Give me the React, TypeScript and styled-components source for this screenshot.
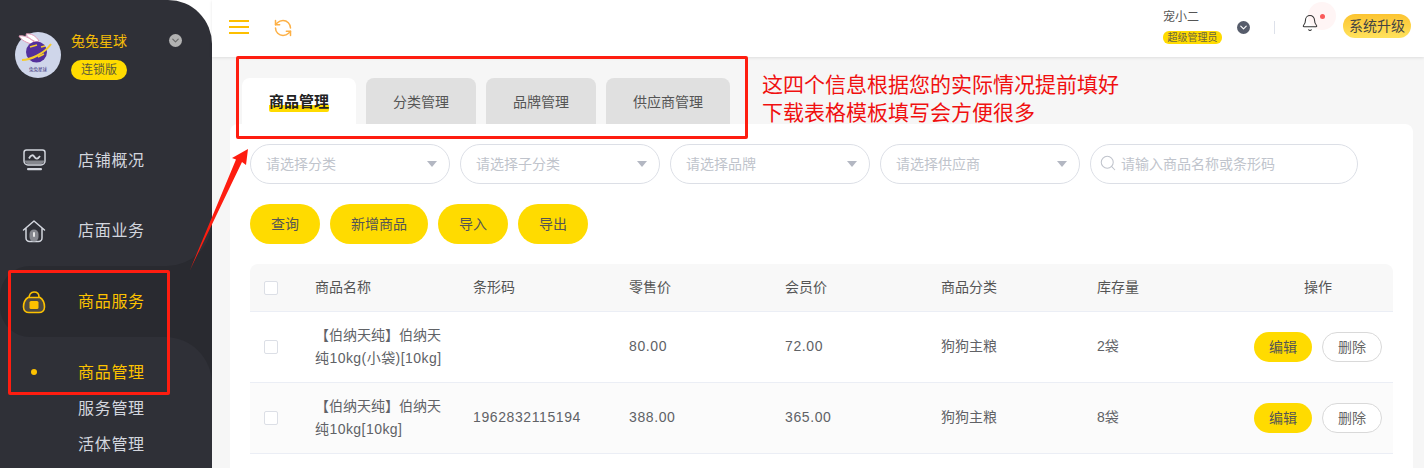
import React from 'react';
import styled, { createGlobalStyle } from 'styled-components';
import { RefreshCcw, Search, Bell, ChevronDown } from 'lucide-react';

const SANS = `"Liberation Sans", "Noto Sans CJK SC", sans-serif`;
const LIGHT = '#2f3037';
const DARK = '#292a30';
const YELLOW = '#ffdb00';
const AMBER = '#fdc200';

const Global = createGlobalStyle`
  html, body { margin: 0; padding: 0; height: 100%; overflow: hidden; background: #fff; }
  body { font-family: ${SANS}; font-size: 14px; color: #606266; }
  #root { height: 100%; }
  * { box-sizing: border-box; }
`;

const Shell = styled.div`
  position: relative;
  display: flex;
  width: 1424px;
  height: 468px;
  overflow: hidden;
  background: #fff;
`;

const Sidebar = styled.aside`
  flex: 0 0 212px;
  height: 100%;
  display: flex;
  flex-direction: column;
  background: ${LIGHT};
  border-top-right-radius: 44px;
  overflow: hidden;
`;

const Profile = styled.div`
  height: 125px;
  padding: 32px 30px 0 15px;
  display: flex;
  align-items: flex-start;
`;

const Logo = styled.svg`
  flex: 0 0 46px;
  width: 46px;
  height: 46px;
`;

const ProfileInfo = styled.div`
  margin-left: 10px;
  width: 56px;
  display: flex;
  flex-direction: column;
  align-items: stretch;
`;

const ShopName = styled.div`
  font-size: 14px;
  line-height: 20px;
  margin-top: -1px;
  color: #f3bb06;
  white-space: nowrap;
`;

const PlanBadge = styled.div`
  margin-top: 9px;
  height: 20px;
  border-radius: 10px;
  background: ${YELLOW};
  color: #5c5a3a;
  font-size: 12px;
  line-height: 20px;
  text-align: center;
`;

const ProfileChevron = styled.span`
  margin-left: 42px;
  margin-top: 2px;
  width: 13px;
  height: 13px;
  border-radius: 50%;
  background: #b2b2b2;
  color: #6a6a6a;
  display: flex;
  align-items: center;
  justify-content: center;
`;

const NavItem = styled.div<{ $h?: number; $active?: boolean; $round?: boolean }>`
  height: ${p => p.$h ?? 71}px;
  display: flex;
  align-items: center;
  padding-left: 22px;
  color: ${p => (p.$active ? AMBER : '#d3d6de')};
  background: ${p => (p.$active ? DARK : LIGHT)};
  border-radius: ${p => (p.$active ? '30px 0 0 30px' : p.$round ? '0 0 45px 0' : '0')};
`;

const NavIcon = styled.svg`
  width: 24px;
  height: 24px;
  flex: 0 0 24px;
`;

const NavLabel = styled.span`
  margin-left: 32px;
  margin-bottom: 3px;
  font-size: 16px;
  letter-spacing: 0.7px;
  white-space: nowrap;
`;

const Band = styled.div`
  flex: 1;
  display: flex;
  flex-direction: column;
  background: linear-gradient(to right, ${LIGHT} 50%, ${DARK} 50%);
`;

const SubMenu = styled.div`
  flex: 1;
  padding-top: 17px;
  background: ${LIGHT};
  border-top-right-radius: 47px;
`;

const SubItem = styled.div<{ $active?: boolean }>`
  height: 36px;
  display: flex;
  align-items: center;
  padding-left: 31px;
  color: ${p => (p.$active ? AMBER : '#d3d6de')};
`;

const Dot = styled.span<{ $on?: boolean }>`
  flex: 0 0 6px;
  width: 6px;
  height: 6px;
  border-radius: 50%;
  background: ${p => (p.$on ? AMBER : 'transparent')};
`;

const SubLabel = styled.span`
  margin-left: 41px;
  margin-bottom: 2px;
  font-size: 16px;
  letter-spacing: 0.7px;
  white-space: nowrap;
`;

const Main = styled.main`
  flex: 1;
  min-width: 0;
  display: flex;
  flex-direction: column;
  background: #f6f6f6;
`;

const TopBar = styled.header`
  flex: 0 0 57px;
  height: 57px;
  background: #fff;
  box-shadow: 0 1px 3px rgba(0, 0, 0, 0.1);
  display: flex;
  align-items: flex-start;
  padding: 0 13px 0 17px;
`;

const Burger = styled.div`
  margin-top: 20px;
  width: 20px;
  height: 14px;
  display: flex;
  flex-direction: column;
  justify-content: space-between;
`;

const BurgerBar = styled.span`
  display: block;
  height: 2px;
  background: #fdbf00;
`;

const RefreshBox = styled.span`
  margin-left: 24px;
  margin-top: 18px;
  width: 20px;
  height: 20px;
  color: #fdb045;
  display: flex;
`;

const Spacer = styled.div`
  flex: 1;
`;

const UserBox = styled.div`
  margin-top: 9px;
  width: 59px;
  display: flex;
  flex-direction: column;
  align-items: flex-start;
`;

const UserName = styled.div`
  font-size: 12px;
  line-height: 17px;
  color: #555;
`;

const RoleBadge = styled.div`
  margin-top: 5px;
  width: 59px;
  height: 13px;
  border-radius: 6px;
  background: ${YELLOW};
  color: #6a6440;
  font-size: 10px;
  line-height: 13px;
  text-align: center;
  white-space: nowrap;
`;

const UserChevron = styled.span`
  margin-left: 15px;
  margin-top: 21px;
  width: 13px;
  height: 13px;
  border-radius: 50%;
  background: #565c6b;
  color: #fff;
  display: flex;
  align-items: center;
  justify-content: center;
`;

const Divider = styled.span`
  margin-left: 24px;
  margin-top: 21px;
  width: 1px;
  height: 13px;
  background: #dde1ea;
`;

const BellBox = styled.div`
  position: relative;
  margin-left: 28px;
  margin-top: 16px;
  width: 14px;
  height: 16px;
  color: #333;
  display: flex;
`;

const BellHalo = styled.span`
  position: absolute;
  left: 5px;
  top: -14px;
  width: 28px;
  height: 28px;
  border-radius: 50%;
  background: #fff5f5;
`;

const BellDot = styled.span`
  position: absolute;
  left: 17px;
  top: -2px;
  width: 5px;
  height: 5px;
  border-radius: 50%;
  background: #fa5a5a;
`;

const BellGlyph = styled(Bell)`
  position: relative;
  flex: 0 0 18px;
  margin: -2px 0 0 -2px;
`;

const UpgradeButton = styled.button`
  margin-left: 26px;
  margin-top: 14px;
  width: 68px;
  height: 24px;
  border: 0;
  padding: 0;
  border-radius: 12px;
  background: linear-gradient(180deg, #fcc431, #ffe25c);
  color: #444;
  font: 14px/24px ${SANS};
  white-space: nowrap;
  position: relative;
`;

const Content = styled.div`
  flex: 1;
  min-height: 0;
  display: flex;
  flex-direction: column;
  padding: 21px 11px 0 18px;
`;

const Tabs = styled.div`
  flex: 0 0 46px;
  height: 46px;
  display: flex;
  gap: 10px;
  padding-left: 12px;
`;

const Tab = styled.div<{ $active?: boolean; $w: number }>`
  width: ${p => p.$w}px;
  height: 46px;
  border-radius: 8px 8px 0 0;
  background: ${p => (p.$active ? '#fff' : '#e0e0e0')};
  color: ${p => (p.$active ? '#222' : '#555')};
  display: flex;
  align-items: center;
  justify-content: center;
`;

const TabActiveLabel = styled.span`
  font-size: 15px;
  font-weight: 700;
  line-height: 20px;
  height: 20px;
  margin-top: 2px;
  background: linear-gradient(${YELLOW}, ${YELLOW}) no-repeat 0 100% / 100% 7px;
  border-radius: 2px;
`;

const Card = styled.section`
  flex: 1;
  min-height: 0;
  background: #fff;
  border-radius: 8px 8px 0 0;
  padding: 20px 20px 0;
  overflow: hidden;
`;

const Filters = styled.div`
  display: flex;
  gap: 10px;
`;

const SelectBox = styled.div`
  width: 200px;
  height: 40px;
  border: 1px solid #dcdfe6;
  border-radius: 20px;
  display: flex;
  align-items: center;
  justify-content: space-between;
  padding: 0 12px 2px 15px;
  color: #c0c4cc;
  font-size: 14px;
`;

const Caret = styled.span`
  width: 0;
  height: 0;
  margin-top: 2px;
  border-left: 5px solid transparent;
  border-right: 5px solid transparent;
  border-top: 6px solid #b3b7c2;
`;

const SearchBox = styled.div`
  width: 268px;
  height: 40px;
  border: 1px solid #dcdfe6;
  border-radius: 20px;
  display: flex;
  align-items: center;
  padding: 0 0 2px 8px;
  color: #c0c4cc;
  font-size: 14px;
  gap: 4px;
`;

const Actions = styled.div`
  margin-top: 20px;
  display: flex;
  gap: 10px;
`;

const PillButton = styled.button<{ $w: number }>`
  width: ${p => p.$w}px;
  height: 40px;
  border: 0;
  padding: 0 0 2px;
  border-radius: 20px;
  background: ${YELLOW};
  color: #555;
  font: 14px ${SANS};
`;

const Table = styled.div`
  margin-top: 20px;
`;

const Row = styled.div<{ $head?: boolean; $alt?: boolean }>`
  display: grid;
  grid-template-columns: 55px 158px 156px 156px 156px 156px 156px 150px;
  align-items: center;
  height: ${p => (p.$head ? 48 : 71)}px;
  border-bottom: 1px solid #ebeef5;
  background: ${p => (p.$head ? '#f8f8f8' : p.$alt ? '#fbfbfb' : '#fff')};
  border-radius: ${p => (p.$head ? '8px 8px 0 0' : '0')};
  color: ${p => (p.$head ? '#555' : '#606266')};
`;

const Check = styled.span`
  display: block;
  width: 14px;
  height: 14px;
  margin-left: 14px;
  border: 1px solid #dcdfe6;
  border-radius: 2px;
  background: #fff;
`;

const Cell = styled.div`
  padding: 0 10px;
  font-size: 14px;
  line-height: 23px;
`;

const NameLine = styled.div<{ $spaced?: boolean }>`
  white-space: nowrap;
  letter-spacing: ${p => (p.$spaced ? '0.45px' : '0')};
`;

const BodyCell = styled(Cell)`
  padding-bottom: 2px;
`;

const NumCell = styled(BodyCell)`
  letter-spacing: 0.6px;
`;

const OpsHead = styled(Cell)`
  text-align: center;
  padding: 0;
`;

const Ops = styled.div`
  display: flex;
  gap: 10px;
  padding-left: 11px;
`;

const EditButton = styled.button`
  width: 58px;
  height: 30px;
  border: 0;
  padding: 0 0 2px;
  border-radius: 15px;
  background: ${YELLOW};
  color: #555;
  font: 14px ${SANS};
`;

const DeleteButton = styled.button`
  width: 60px;
  height: 30px;
  padding: 0 0 2px;
  border: 1px solid #d9d9d9;
  border-radius: 15px;
  background: #fff;
  color: #666;
  font: 14px ${SANS};
`;

/* Hand-drawn review marks that lie on top of the screenshot */
const MarkBox = styled.div<{ $x: number; $y: number; $w: number; $h: number }>`
  position: absolute;
  left: ${p => p.$x}px;
  top: ${p => p.$y}px;
  width: ${p => p.$w}px;
  height: ${p => p.$h}px;
  border: 3px solid #fe1d10;
  border-radius: 2px;
  pointer-events: none;
`;

const MarkNote = styled.div`
  position: absolute;
  left: 762px;
  top: 69px;
  font: 21px/28px "Noto Sans CJK SC", sans-serif;
  color: #f01010;
  white-space: nowrap;
`;

const MarkArrow = styled.svg`
  position: absolute;
  left: 0;
  top: 0;
  pointer-events: none;
`;

const rows = [
  { line1: '【伯纳天纯】伯纳天', line2: '纯10kg(小袋)[10kg]', code: '', price: '80.00', member: '72.00', cat: '狗狗主粮', stock: '2袋' },
  { line1: '【伯纳天纯】伯纳天', line2: '纯10kg[10kg]', code: '1962832115194', price: '388.00', member: '365.00', cat: '狗狗主粮', stock: '8袋' },
];

export default function App() {
  return (
    <Shell>
      <Global />
      <Sidebar>
        <Profile>
          <Logo viewBox="0 0 46 46">
            <circle cx="23" cy="23" r="23" fill="#cfd6ea" />
            <path d="M17 12 C12 11 6 8 4 4 C9 3 15 6 19 10Z" fill="#fff" stroke="#e29ab6" strokeWidth="1" />
            <path d="M21 10 C17 8 12 5 11 2 C16 1 21 4 24 9Z" fill="#fff" stroke="#e29ab6" strokeWidth="1" />
            <circle cx="21.5" cy="20" r="10.5" fill="#53309c" />
            <path d="M7 28 C15 28 29 22 36 12" fill="none" stroke="#f5cc2e" strokeWidth="2" />
            <path d="M15 15 L22 13 M23 25 L29 22 M26 15 L30 14" stroke="#f5cc2e" strokeWidth="1.6" />
            <text x="23" y="39" textAnchor="middle" fontSize="4.5" fill="#3a2f78" fontFamily={SANS}>兔兔星球</text>
          </Logo>
          <ProfileInfo>
            <ShopName>兔兔星球</ShopName>
            <PlanBadge>连锁版</PlanBadge>
          </ProfileInfo>
          <ProfileChevron><ChevronDown size={11} strokeWidth={2.5} /></ProfileChevron>
        </Profile>
        <NavItem $h={70}>
          <NavIcon viewBox="0 0 24 24" fill="none">
            <path d="M4.5 2 H20.5 A2.5 2.5 0 0 1 23 4.5 V13 A4 4 0 0 1 19 17 H6 A4 4 0 0 1 2 13 V4.5 A2.5 2.5 0 0 1 4.5 2Z" stroke="#d3d6de" strokeWidth="1.5" />
            <path d="M3 12.5 H22 V13 a3 3 0 0 1 -3 3 H6 a3 3 0 0 1 -3 -3Z" fill="#85878e" />
            <path d="M7 10.5 C9 6.5 11 6.5 12.5 9 C14 11.5 16 11 18 8" stroke="#d3d6de" strokeWidth="1.8" />
            <rect x="5" y="20" width="15" height="2.2" rx="1" fill="#d3d6de" />
          </NavIcon>
          <NavLabel>店铺概况</NavLabel>
        </NavItem>
        <Band>
          <NavItem $round>
            <NavIcon viewBox="0 0 24 24" fill="none">
              <path d="M1.5 11 L12 2 L22.5 11 M4 9.5 V19 a3.5 3.5 0 0 0 3.5 3.5 H16.5 a3.5 3.5 0 0 0 3.5 -3.5 V9.5" stroke="#d3d6de" strokeWidth="1.5" strokeLinejoin="round" strokeLinecap="round" />
              <rect x="7.5" y="10.5" width="9" height="12" rx="4.5" fill="#85878e" />
              <rect x="11" y="13" width="2" height="5" rx="1" fill="#e6e6e6" />
            </NavIcon>
            <NavLabel>店面业务</NavLabel>
          </NavItem>
          <NavItem $active>
            <NavIcon viewBox="0 0 24 24" fill="none">
              <path d="M7 9 C7 4 9 2 12 2 C15 2 17 4 17 7" stroke={AMBER} strokeWidth="1.6" />
              <path d="M6 7.5 H18 C21 9.5 22.5 13 22.5 17 C22.5 20.5 20 22.5 17 22.5 H7 C4 22.5 1.5 20.5 1.5 17 C1.5 13 3 9.5 6 7.5Z" stroke={AMBER} strokeWidth="1.6" fill="#4e4a42" />
              <rect x="7.5" y="11" width="9" height="8" rx="1.5" fill={AMBER} />
            </NavIcon>
            <NavLabel>商品服务</NavLabel>
          </NavItem>
          <SubMenu>
            <SubItem $active><Dot $on /><SubLabel>商品管理</SubLabel></SubItem>
            <SubItem><Dot /><SubLabel>服务管理</SubLabel></SubItem>
            <SubItem><Dot /><SubLabel>活体管理</SubLabel></SubItem>
          </SubMenu>
        </Band>
      </Sidebar>
      <Main>
        <TopBar>
          <Burger><BurgerBar /><BurgerBar /><BurgerBar /></Burger>
          <RefreshBox><RefreshCcw size={20} strokeWidth={1.8} /></RefreshBox>
          <Spacer />
          <UserBox>
            <UserName>宠小二</UserName>
            <RoleBadge>超级管理员</RoleBadge>
          </UserBox>
          <UserChevron><ChevronDown size={11} strokeWidth={2.5} /></UserChevron>
          <Divider />
          <BellBox>
            <BellHalo />
            <BellGlyph size={18} strokeWidth={1.4} />
            <BellDot />
          </BellBox>
          <UpgradeButton>系统升级</UpgradeButton>
        </TopBar>
        <Content>
          <Tabs>
            <Tab $active $w={114}><TabActiveLabel>商品管理</TabActiveLabel></Tab>
            <Tab $w={110}>分类管理</Tab>
            <Tab $w={110}>品牌管理</Tab>
            <Tab $w={124}>供应商管理</Tab>
          </Tabs>
          <Card>
            <Filters>
              <SelectBox>请选择分类<Caret /></SelectBox>
              <SelectBox>请选择子分类<Caret /></SelectBox>
              <SelectBox>请选择品牌<Caret /></SelectBox>
              <SelectBox>请选择供应商<Caret /></SelectBox>
              <SearchBox><Search size={18} strokeWidth={1.4} />请输入商品名称或条形码</SearchBox>
            </Filters>
            <Actions>
              <PillButton $w={70}>查询</PillButton>
              <PillButton $w={98}>新增商品</PillButton>
              <PillButton $w={70}>导入</PillButton>
              <PillButton $w={70}>导出</PillButton>
            </Actions>
            <Table>
              <Row $head>
                <Check />
                <Cell>商品名称</Cell>
                <Cell>条形码</Cell>
                <Cell>零售价</Cell>
                <Cell>会员价</Cell>
                <Cell>商品分类</Cell>
                <Cell>库存量</Cell>
                <OpsHead>操作</OpsHead>
              </Row>
              {rows.map((r, i) => (
                <Row key={r.line2} $alt={i === 1}>
                  <Check />
                  <Cell>
                    <NameLine>{r.line1}</NameLine>
                    <NameLine $spaced>{r.line2}</NameLine>
                  </Cell>
                  <NumCell>{r.code}</NumCell>
                  <NumCell>{r.price}</NumCell>
                  <NumCell>{r.member}</NumCell>
                  <BodyCell>{r.cat}</BodyCell>
                  <BodyCell>{r.stock}</BodyCell>
                  <Ops>
                    <EditButton>编辑</EditButton>
                    <DeleteButton>删除</DeleteButton>
                  </Ops>
                </Row>
              ))}
            </Table>
          </Card>
        </Content>
      </Main>
      <MarkBox $x={236} $y={56} $w={512} $h={83} />
      <MarkBox $x={8} $y={270} $w={162} $h={125} />
      <MarkNote>
        这四个信息根据您的实际情况提前填好<br />
        下载表格模板填写会方便很多
      </MarkNote>
      <MarkArrow width="1424" height="468" viewBox="0 0 1424 468">
        <polygon points="190,270 236,159.5 232,158 248,149 246,165 242,162" fill="#fe1d10" />
      </MarkArrow>
    </Shell>
  );
}
